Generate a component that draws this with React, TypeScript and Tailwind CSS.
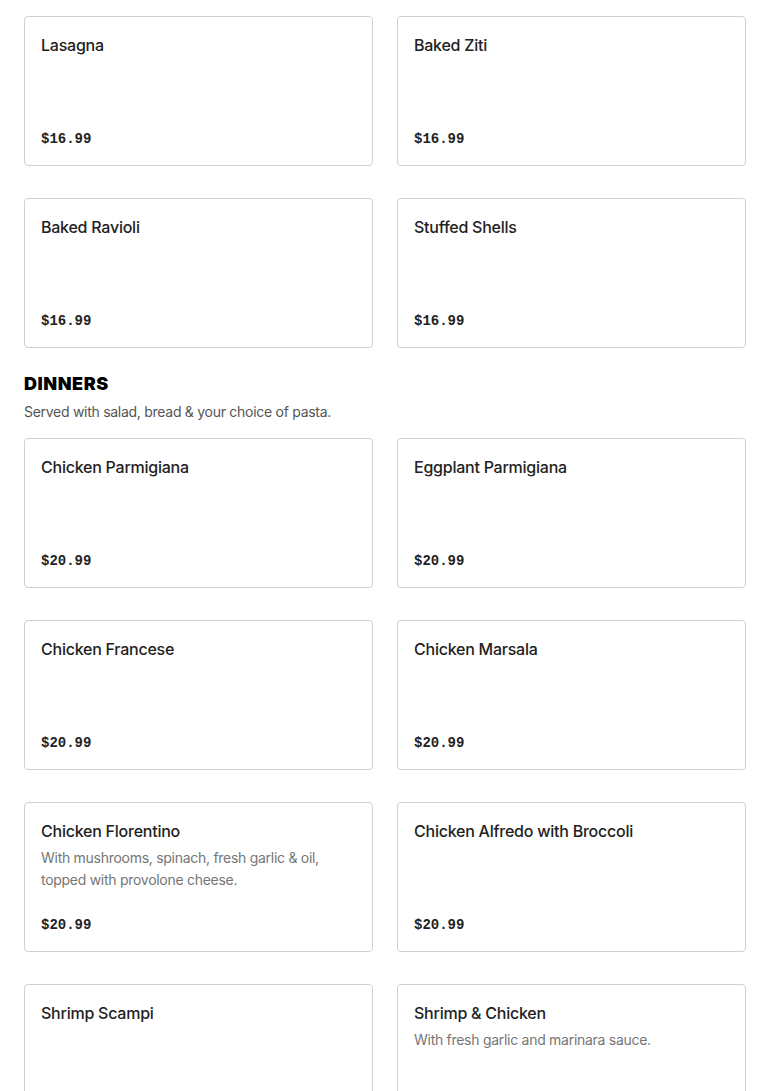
type Item = {
  name: string
  price: string
  description?: string
}

const pasta: Item[] = [
  { name: 'Lasagna', price: '$16.99' },
  { name: 'Baked Ziti', price: '$16.99' },
  { name: 'Baked Ravioli', price: '$16.99' },
  { name: 'Stuffed Shells', price: '$16.99' },
]

const dinners: Item[] = [
  { name: 'Chicken Parmigiana', price: '$20.99' },
  { name: 'Eggplant Parmigiana', price: '$20.99' },
  { name: 'Chicken Francese', price: '$20.99' },
  { name: 'Chicken Marsala', price: '$20.99' },
  {
    name: 'Chicken Florentino',
    price: '$20.99',
    description: 'With mushrooms, spinach, fresh garlic & oil, topped with provolone cheese.',
  },
  { name: 'Chicken Alfredo with Broccoli', price: '$20.99' },
  { name: 'Shrimp Scampi', price: '$20.99' },
  { name: 'Shrimp & Chicken', price: '$20.99', description: 'With fresh garlic and marinara sauce.' },
]

function MenuCard({ item }: { item: Item }) {
  return (
    <div className="flex h-[150px] flex-col rounded-[4px] border border-[#d0d0d0] bg-white px-4 pt-4 pb-[15px]">
      <h3 className="text-[16px] leading-6 font-medium tracking-[-0.015em] text-[#222]">{item.name}</h3>
      {item.description && (
        <p className="mt-1 text-[14px] leading-[22px] tracking-[-0.02em] text-[#767676]">{item.description}</p>
      )}
      <div className="flex-1" />
      <div className="font-['Liberation_Mono',monospace] text-[14px] leading-[22px] font-bold text-[#222]">
        {item.price}
      </div>
    </div>
  )
}

export default function App() {
  return (
    <div className="min-h-screen bg-white px-6 pt-4 pb-8 font-['Inter',sans-serif]">
      {/* Pasta */}
      <div className="grid grid-cols-2 gap-x-6 gap-y-8">
        {pasta.map((item) => (
          <MenuCard key={item.name} item={item} />
        ))}
      </div>

      {/* Dinners */}
      <div className="mt-6 mb-4">
        <h2 className="text-[18px] leading-6 font-black tracking-[0.03em] text-black">DINNERS</h2>
        <p className="mt-[6px] text-[14px] leading-5 tracking-[-0.02em] text-[#555]">
          Served with salad, bread &amp; your choice of pasta.
        </p>
      </div>
      <div className="grid grid-cols-2 gap-x-6 gap-y-8">
        {dinners.map((item) => (
          <MenuCard key={item.name} item={item} />
        ))}
      </div>
    </div>
  )
}
